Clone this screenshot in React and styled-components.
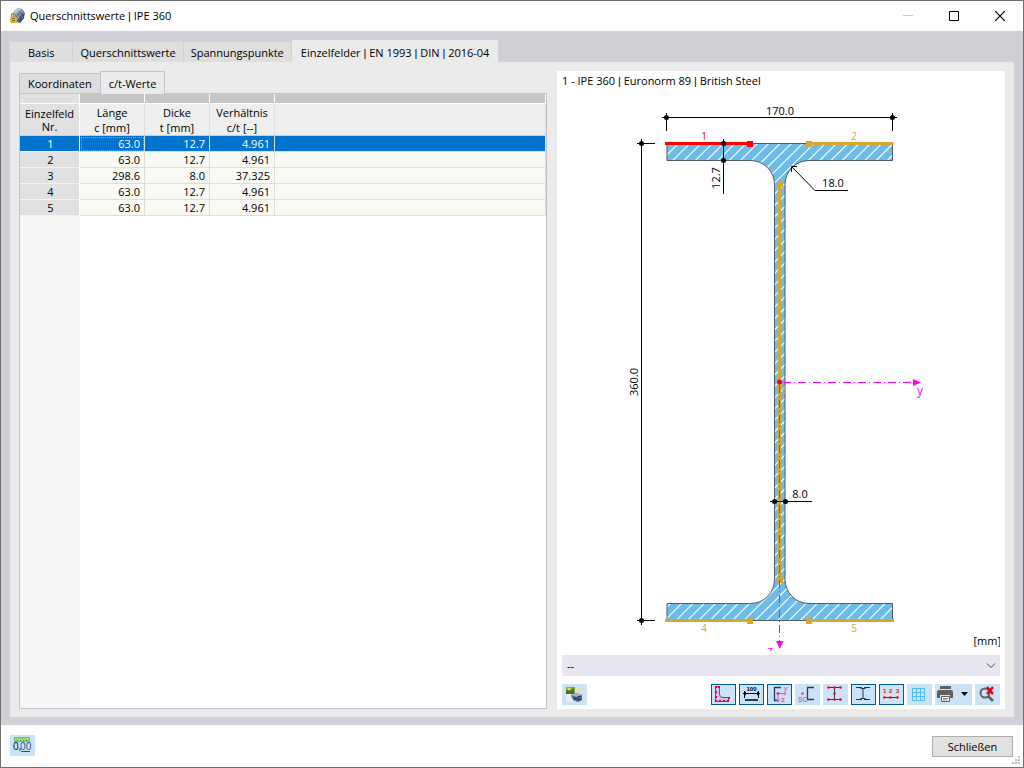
import React, { useState } from "react";
import styled, { createGlobalStyle, css } from "styled-components";

const GlobalStyle = createGlobalStyle`
  * {
    box-sizing: border-box;
  }
  body {
    margin: 0;
    background: #fff;
    color: #000;
    font-family: "Open Sans", "Noto Sans", sans-serif;
    font-size: 11px;
    line-height: 16px;
  }
  button,
  select {
    font: inherit;
    color: inherit;
  }
`;

const Window = styled.div`
  display: flex;
  flex-direction: column;
  min-height: 100vh;
  border: 1px solid #707070;
  background: #fff;
`;

const TitleBar = styled.header`
  display: flex;
  align-items: center;
  height: 30px;
  padding-left: 8px;
  h1 {
    flex: 1;
    margin: 0 0 0 5px;
    font-size: 11px;
    font-weight: 400;
  }
`;

const WindowButton = styled.button`
  display: grid;
  place-items: center;
  width: 46px;
  height: 28px;
  padding: 0;
  border: 0;
  background: none;
`;

const Body = styled.main`
  flex: 1;
  display: flex;
  flex-direction: column;
  padding: 9px 9px 8px;
  background: #d1d0d6;
`;

const MainTabs = styled.div`
  display: flex;
  align-items: flex-end;
`;

const MainTab = styled.button`
  height: 20px;
  margin: 0;
  padding: 2px 7px 0;
  border: 0;
  border-right: 1px solid #d1d0d6;
  background: #dedede;
  white-space: nowrap;
  &:first-child {
    padding: 2px 18px 0;
  }
  ${({ $active }) =>
    $active &&
    css`
      height: 22px;
      padding: 4px 9px 0;
      border: 0;
      background: #ebebeb;
      line-height: 14px;
    `}
`;

/* thin separator between the parts of a title */
const Bar = styled.span`
  font-family: "Liberation Sans", sans-serif;
`;

const Panel = styled.div`
  flex: 1;
  display: grid;
  grid-template-columns: 528fr 448fr;
  gap: 10px;
  padding: 9px 9px 8px;
  background: #ebebeb;
`;

const Left = styled.section`
  display: flex;
  flex-direction: column;
`;

const SubTabs = styled.div`
  display: flex;
  align-items: flex-end;
`;

const SubTab = styled.button`
  height: 20px;
  padding: 1px 8px 0;
  border: 1px solid #c3c3cf;
  border-width: 1px 0 0 1px;
  background: #dedede;
  white-space: nowrap;
  ${({ $active }) =>
    $active &&
    css`
      z-index: 1;
      height: 23px;
      margin-bottom: -1px;
      padding-top: 2px;
      border-right-width: 1px;
      background: #ebebeb;
    `}
`;

const TableFrame = styled.div`
  flex: 1;
  border: 1px solid #c3c3cf;
  background: linear-gradient(to right, #f7f7f7 60px, #fff 60px);
`;

const Table = styled.table`
  width: 100%;
  table-layout: fixed;
  border-collapse: separate;
  border-spacing: 0;
  th,
  td {
    height: 16px;
    padding: 0 4px 0 3px;
    border: 0 solid #ddd;
    border-width: 0 1px 1px 0;
    line-height: 15px;
    font-weight: 400;
  }
  td {
    background: #f9faf4;
    text-align: right;
  }
`;

const BarCell = styled.td`
  && {
    height: 10px;
    padding: 0;
    border-color: #fff;
    line-height: 9px;
    background: ${({ $first }) => ($first ? "#e1e1e1" : "#c6c6c6")};
  }
`;

const HeadCell = styled.th`
  && {
    height: 32px;
    padding: 0;
    border-color: #ccc;
    border-right-color: #ddd;
    line-height: 15px;
    background: #efefef;
    text-align: center;
  }
  &&:first-child {
    border-right-color: #fff;
    line-height: 13px;
    background: #e1e1e1;
  }
`;

const RowHead = styled.th`
  && {
    padding: 0 0 0 2px;
    border-color: #fff;
    border-bottom-color: #f4f4f4;
    background: #e1e1e1;
  }
`;

const Row = styled.tr`
  ${({ $selected }) =>
    $selected &&
    css`
      && > td,
      && > th {
        background: #0073cf;
        color: #fff;
      }
      && > td:nth-child(2) {
        outline: 1px dotted #ff8427;
        outline-offset: -2px;
      }
    `}
`;

const Preview = styled.section`
  display: flex;
  flex-direction: column;
  padding: 2px 5px 4px;
  background: #fff;
  h2 {
    margin: 0 0 1px;
    font-size: 11px;
    font-weight: 400;
  }
`;

const Drawing = styled.svg`
  display: block;
  width: 100%;
  font-family: "Open Sans", "Noto Sans", sans-serif;
  font-size: 11px;
`;

const SelectWrap = styled.div`
  display: grid;
  align-items: center;
  margin: 4px 0 8px;
  select,
  svg {
    grid-area: 1 / 1;
  }
  select {
    appearance: none;
    width: 100%;
    height: 21px;
    padding: 0 5px;
    border: 0;
    border-radius: 0;
    background: #e7e7f2;
  }
  svg {
    justify-self: end;
    margin-right: 4px;
    pointer-events: none;
  }
`;

const Toolbar = styled.div`
  display: flex;
  gap: 3px;
`;

const Spacer = styled.span`
  flex: 1;
`;

const ToolButton = styled.button`
  display: flex;
  align-items: center;
  justify-content: ${({ $wide }) => ($wide ? "flex-start" : "center")};
  width: ${({ $wide }) => ($wide ? "37px" : "25px")};
  height: 21px;
  padding: 0;
  border: ${({ $on }) => ($on ? "1px solid #00599f" : "0")};
  background: #cbe3f7;
  svg {
    flex: none;
    display: block;
  }
`;

const Footer = styled.footer`
  position: relative;
  display: flex;
  align-items: flex-start;
  justify-content: space-between;
  height: 42px;
  padding: 10px 10px 10px 9px;
  background: #fff;
`;

const CloseButton = styled.button`
  align-self: flex-end;
  width: 81px;
  height: 21px;
  padding: 1px 0 0;
  border: 1px solid #adadad;
  background: #e1e1e1;
`;

const Grip = styled.svg`
  position: absolute;
  right: 3px;
  bottom: 3px;
`;

const mainTabs = [
  ["Basis"],
  ["Querschnittswerte"],
  ["Spannungspunkte"],
  ["Einzelfelder", "EN 1993", "DIN", "2016-04"],
];

const rows = [
  { nr: 1, c: "63.0", t: "12.7", ratio: "4.961" },
  { nr: 2, c: "63.0", t: "12.7", ratio: "4.961" },
  { nr: 3, c: "298.6", t: "8.0", ratio: "37.325" },
  { nr: 4, c: "63.0", t: "12.7", ratio: "4.961" },
  { nr: 5, c: "63.0", t: "12.7", ratio: "4.961" },
];

const sectionPath =
  "M667 143.5H892.5V160.5H809A24 24 0 0 0 785 184.5V579.5A24 24 0 0 0 809 603.5H892.5V620.5H667V603.5H750.5A24 24 0 0 0 774.5 579.5V184.5A24 24 0 0 0 750.5 160.5H667Z";

// 45° lines x + y = const, clipped to the profile
const hatchStep = 11.3;
const hatchPath = Array.from({ length: 64 }, (_, i) => {
  const sum = 810.6 + i * hatchStep;
  return `M${sum - 630} 630 ${sum - 140} 140`;
}).join("");

function Joined({ parts }) {
  return parts.map((part, i) => (
    <React.Fragment key={part}>
      {i > 0 && (
        <>
          {" "}
          <Bar>|</Bar>{" "}
        </>
      )}
      {part}
    </React.Fragment>
  ));
}

function AppIcon() {
  return (
    <svg width="16" height="16" viewBox="0 0 16 16">
      <path d="M5 3 9 0l4 1 3 4-1 5-4 5-5-1-2-6Z" fill="#5f7396" />
      <path d="M5 3 9 0l4 1-4 2-4 5Z" fill="#b4c5da" />
      <path d="M11 5l4-1v6l-4 5-2-4Z" fill="#3e4f70" />
      <path
        d="M5 4l6 7M7 2l7 8M10 1l5 5M5 8l7-7M8 11l6-8"
        stroke="#c5d3e3"
        strokeWidth=".6"
      />
      <path
        d="M2.500 9V7.500a2 2 0 0 1 4 0V9"
        fill="none"
        stroke="#a88b32"
        strokeWidth="1.400"
      />
      <rect x="1" y="8.500" width="7" height="6.500" rx="2" fill="#d9b33a" />
      <path d="M3 10.500h3M3 12.500h3" stroke="#8d701c" />
    </svg>
  );
}

function Dot({ x, y }) {
  return <circle cx={x} cy={y} r="2.500" />;
}

function SectionDrawing() {
  return (
    <Drawing viewBox="562 90 438 561" role="img" aria-label="IPE 360">
      <defs>
        <clipPath id="profile">
          <path d={sectionPath} />
        </clipPath>
      </defs>
      <path d={sectionPath} fill="#6cbbe9" />
      <path
        d={hatchPath}
        clipPath="url(#profile)"
        stroke="#fff"
        strokeWidth="1.100"
      />
      <path d={sectionPath} fill="none" stroke="#4d5c66" />

      {/* plate elements */}
      <g stroke="#d6a632" strokeWidth="3" fill="#d6a632">
        <path d="M809 143.500H893.500M779.500 185V583M665 620.500H750M809 620.500H894" />
        <g stroke="none">
          <rect x="806" y="141" width="6" height="6" />
          <rect x="777" y="181" width="6" height="6" />
          <rect x="777" y="577" width="6" height="6" />
          <rect x="747" y="618" width="6" height="6" />
          <rect x="806" y="618" width="6" height="6" />
        </g>
      </g>
      <path d="M665 143.500H750" stroke="#f00" strokeWidth="3" />
      <rect x="747" y="141" width="6" height="6" fill="#f00" />
      <g fontSize="10" textAnchor="middle" fill="#d6a632">
        <text x="704" y="140" fill="#f00">
          1
        </text>
        <text x="854" y="140">2</text>
        <text x="783" y="394">3</text>
        <text x="704" y="632">4</text>
        <text x="854" y="632">5</text>
      </g>

      {/* principal axes */}
      <g stroke="#f0f" strokeDasharray="8 3 1 3" fill="none">
        <path d="M783 382.500H913" />
        <path d="M779.500 385V641" />
      </g>
      <g fill="#f0f">
        <path d="M913 379v7l8-3.500Z" />
        <path d="M776 641h7.500l-3.750 8Z" />
        <text x="917" y="395" fontSize="12">
          y
        </text>
        <text x="767" y="655" fontSize="12">
          z
        </text>
      </g>
      <circle cx="779.500" cy="382" r="2.500" fill="#f00" />

      {/* dimensions */}
      <g stroke="#000" fill="none" shapeRendering="crispEdges">
        <path d="M662 117.500H897M666.500 113V131M892.500 113V131" />
        <path d="M641.500 139V625M637 143.500H655M637 620.500H655" />
        <path d="M723.500 139V194" />
        <path d="M770 501.500H812" />
      </g>
      <path
        d="M791.500 166.500 815 190.500H848M791.500 172V166.500H797"
        stroke="#000"
        fill="none"
      />
      <Dot x={666.5} y={117.5} />
      <Dot x={892.5} y={117.5} />
      <Dot x={641.5} y={143.5} />
      <Dot x={641.5} y={620.5} />
      <Dot x={723.5} y={143.5} />
      <Dot x={723.5} y={160.5} />
      <Dot x={774.5} y={501.5} />
      <Dot x={785.5} y={501.5} />
      <g textAnchor="middle">
        <text x="780" y="115">
          170.0
        </text>
        <text x="833" y="187">
          18.0
        </text>
        <text x="800" y="498">
          8.0
        </text>
        <text transform="translate(720 178) rotate(-90)">12.7</text>
        <text transform="translate(638 382) rotate(-90)">360.0</text>
      </g>
      <text x="1001" y="645" textAnchor="end">
        [mm]
      </text>
    </Drawing>
  );
}

const icons = {
  view: (
    <>
      <rect x="1" y="2" width="9" height="7" fill="#7fa53c" />
      <path d="M1 6l3-2 2 2 3-3v6H1Z" fill="#3f6f3a" />
      <circle cx="4" cy="4" r="1.500" fill="#e8e23a" />
      <path d="M10 2h7v7h-7Z" fill="#e6dfc4" />
      <path d="M1 9h7v8H1Z" fill="#e8eef5" />
      <path d="M6 10l5-2 6 2v5l-4 2-5-2Z" fill="#4c6688" />
      <path d="M6 10l5-2 6 2-5 2Z" fill="#9db7d3" />
      <path d="M9 13l7 2M12 12l4-1" stroke="#26364f" />
    </>
  ),
  shape: (
    <>
      <path
        d="M1.500 1.500H5.500V9Q5.500 12.500 9 12.500H14.500V16.500H1.500Z"
        fill="#c9c3f7"
        stroke="#8d3f7a"
      />
      <path
        d="M1 1h2v2H1ZM4 1h2v2H4ZM1 6h2v2H1ZM1 11h2v2H1ZM1 15h2v2H1ZM5 15h2v2H5ZM9 15h2v2H9ZM14 12h2v2H14ZM13 15h2v2H13Z"
        fill="#f00018"
      />
    </>
  ),
  dimension: (
    <>
      <text
        x="9.500"
        y="5.500"
        fontSize="6"
        fontWeight="700"
        textAnchor="middle"
        fontFamily="Liberation Sans, sans-serif"
      >
        100
      </text>
      <path d="M1 8.500H18M2.500 6V13M16.500 6V13" stroke="#000" />
      <path d="M1 8.500l3-2v4ZM18 8.500l-3-2v4Z" />
      <path d="M3 15H16" stroke="#2b3563" strokeWidth="2" />
    </>
  ),
  axes: (
    <>
      <path
        d="M11 2.500H4.500V15.500H8"
        fill="none"
        stroke="#2b3563"
        strokeWidth="1.300"
      />
      <g stroke="#d4649b" fill="none">
        <path d="M7 8.500H16M8 8.500V17M14 6.500l2 2-2 2M6 14l2 3 2-3M11.500 13.500h3l-3 3h3" />
        <path d="M14 2l2 3.500M17.500 2 14.500 7" strokeWidth=".9" />
      </g>
      <circle cx="8" cy="8.500" r="1.500" fill="#c73f80" />
    </>
  ),
  shearCenter: (
    <>
      <path
        d="M16 2.500H9.500V14.500H16"
        fill="none"
        stroke="#2b3563"
        strokeWidth="1.300"
      />
      <circle cx="4.500" cy="8.500" r="1.500" fill="#d4649b" />
      <text
        x="0"
        y="17"
        fontSize="7"
        fill="#c73f80"
        fontFamily="Liberation Sans Narrow, Liberation Sans, sans-serif"
      >
        SC
      </text>
    </>
  ),
  points: (
    <>
      <path d="M2 2.500H15M2 14.500H15M8.500 2V15" stroke="#2b3563" />
      <g fill="#f00">
        <circle cx="2.500" cy="2.500" r="1.300" />
        <circle cx="8.500" cy="2.500" r="1.300" />
        <circle cx="14.500" cy="2.500" r="1.300" />
        <circle cx="8.500" cy="8.500" r="1.300" />
        <circle cx="2.500" cy="14.500" r="1.300" />
        <circle cx="8.500" cy="14.500" r="1.300" />
        <circle cx="14.500" cy="14.500" r="1.300" />
      </g>
    </>
  ),
  parts: (
    <path
      d="M2 2.500H8M10 2.500H16M2 14.500H8M10 14.500H16M9 4V13M6.500 3.500h5M6.500 13.500h5"
      stroke="#2b3563"
    />
  ),
  numbers: (
    <>
      <g
        fontSize="6"
        fontWeight="700"
        fill="#f00"
        fontFamily="Liberation Sans, sans-serif"
      >
        <text x="1" y="8">
          1
        </text>
        <text x="7" y="8">
          2
        </text>
        <text x="14" y="8">
          3
        </text>
      </g>
      <path d="M2 12.500H16" stroke="#2b3563" />
      <g fill="#f00">
        <circle cx="2.500" cy="12.500" r="1.300" />
        <circle cx="8.500" cy="12.500" r="1.300" />
        <circle cx="15.500" cy="12.500" r="1.300" />
      </g>
    </>
  ),
  grid: (
    <path
      d="M2.500 3.500H14.500V15.500H2.500ZM6.500 3V16M10.500 3V16M2 7.500H15M2 11.500H15"
      fill="none"
      stroke="#4dbcfb"
    />
  ),
  print: (
    <>
      <path
        d="M5 1H16V4H5ZM4 5H16Q18 5 18 7V13H15V10H5V13H2V7Q2 5 4 5Z"
        fill="#606060"
      />
      <path d="M6.500 11.500H14.500V16.500H6.500Z" fill="#fff" stroke="#606060" />
      <path d="M8 13.500H13M8 15H12" stroke="#606060" strokeWidth=".8" />
    </>
  ),
  zoomReset: (
    <>
      <circle
        cx="7"
        cy="8"
        r="4.500"
        fill="none"
        stroke="#606060"
        strokeWidth="2"
      />
      <path d="M10 11l5 5" stroke="#606060" strokeWidth="2.500" />
      <path d="M9 2l6 7M15 2 9 9" stroke="#e3001a" strokeWidth="2.500" />
    </>
  ),
  decimals: (
    <>
      <rect x="1.500" y="1.500" width="15" height="4" fill="#8edb74" stroke="#7cc069" />
      <path d="M4.500 4V5M7.500 4V5M10.500 4V5M13.500 4V5" stroke="#4f9146" />
      <text x="0" y="14" fontSize="10">
        0,
      </text>
      <text x="7" y="14" fontSize="10" fill="#2b4c8c">
        00
      </text>
      <path d="M8 15.500H17" stroke="#2b4c8c" />
    </>
  ),
};

const tools = [
  { icon: "shape", label: "Querschnitt", on: true },
  { icon: "dimension", label: "Bemaßung", on: true },
  { icon: "axes", label: "Achsen", on: true },
  { icon: "shearCenter", label: "Schubmittelpunkt" },
  { icon: "points", label: "Spannungspunkte" },
  { icon: "parts", label: "Einzelfelder", on: true },
  { icon: "numbers", label: "Nummerierung", on: true },
  { icon: "grid", label: "Raster" },
  { icon: "print", label: "Drucken", wide: true },
  { icon: "zoomReset", label: "Zoom zurücksetzen" },
];

function Tool({ icon, label, on, wide }) {
  return (
    <ToolButton type="button" aria-label={label} $on={on} $wide={wide}>
      <svg width="19" height="19" viewBox="0 0 19 19">
        {icons[icon]}
      </svg>
      {wide && (
        <svg width="15" height="7" viewBox="0 0 15 7">
          <path d="M7 1h7L10.500 5Z" />
        </svg>
      )}
    </ToolButton>
  );
}

function ValueTable() {
  const [selected, setSelected] = useState(1);
  return (
    <Table>
      <colgroup>
        <col style={{ width: 60 }} />
        <col style={{ width: 65 }} />
        <col style={{ width: 65 }} />
        <col style={{ width: 65 }} />
        <col />
      </colgroup>
      <thead>
        <tr>
          <BarCell $first />
          <BarCell />
          <BarCell />
          <BarCell />
          <BarCell />
        </tr>
        <tr>
          <HeadCell scope="col">
            Einzelfeld
            <br />
            Nr.
          </HeadCell>
          <HeadCell scope="col">
            Länge
            <br />c [mm]
          </HeadCell>
          <HeadCell scope="col">
            Dicke
            <br />t [mm]
          </HeadCell>
          <HeadCell scope="col">
            Verhältnis
            <br />
            c/t [--]
          </HeadCell>
          <HeadCell />
        </tr>
      </thead>
      <tbody>
        {rows.map((row) => (
          <Row
            key={row.nr}
            $selected={row.nr === selected}
            onClick={() => setSelected(row.nr)}
          >
            <RowHead scope="row">{row.nr}</RowHead>
            <td>{row.c}</td>
            <td>{row.t}</td>
            <td>{row.ratio}</td>
            <td />
          </Row>
        ))}
      </tbody>
    </Table>
  );
}

function App() {
  return (
    <Window>
      <GlobalStyle />
      <TitleBar>
        <AppIcon />
        <h1>
          <Joined parts={["Querschnittswerte", "IPE 360"]} />
        </h1>
        <WindowButton type="button" aria-label="Minimieren">
          <svg width="10" height="10" viewBox="0 0 10 10">
            <path d="M0 4.500H10" stroke="#ccc" />
          </svg>
        </WindowButton>
        <WindowButton type="button" aria-label="Maximieren">
          <svg width="10" height="10" viewBox="0 0 10 10">
            <path d="M.5.500H9.500V9.500H.5Z" fill="none" stroke="#000" />
          </svg>
        </WindowButton>
        <WindowButton type="button" aria-label="Fenster schließen">
          <svg width="10" height="10" viewBox="0 0 10 10">
            <path d="M0 0 10 10M10 0 0 10" stroke="#000" strokeWidth="1.200" />
          </svg>
        </WindowButton>
      </TitleBar>
      <Body>
        <MainTabs role="tablist">
          {mainTabs.map((parts, i) => (
            <MainTab
              key={parts[0]}
              type="button"
              role="tab"
              aria-selected={i === 3}
              $active={i === 3}
            >
              <Joined parts={parts} />
            </MainTab>
          ))}
        </MainTabs>
        <Panel>
          <Left>
            <SubTabs role="tablist">
              <SubTab type="button" role="tab" aria-selected={false}>
                Koordinaten
              </SubTab>
              <SubTab type="button" role="tab" aria-selected $active>
                c/t-Werte
              </SubTab>
            </SubTabs>
            <TableFrame>
              <ValueTable />
            </TableFrame>
          </Left>
          <Preview>
            <h2>
              <Joined parts={["1 - IPE 360", "Euronorm 89", "British Steel"]} />
            </h2>
            <SectionDrawing />
            <SelectWrap>
              <select aria-label="Ergebnis">
                <option>--</option>
              </select>
              <svg width="10" height="6" viewBox="0 0 10 6">
                <path d="M1 .5 5 4.500 9 .5" fill="none" stroke="#444" />
              </svg>
            </SelectWrap>
            <Toolbar>
              <Tool icon="view" label="Ansicht" />
              <Spacer />
              {tools.map((tool) => (
                <Tool key={tool.icon} {...tool} />
              ))}
            </Toolbar>
          </Preview>
        </Panel>
      </Body>
      <Footer>
        <Tool icon="decimals" label="Dezimalstellen" />
        <CloseButton type="button">Schließen</CloseButton>
        <Grip width="8" height="8" viewBox="0 0 8 8" fill="#bfbfbf">
          <path d="M6 0h2v2H6ZM3 3h2v2H3ZM6 3h2v2H6ZM0 6h2v2H0ZM3 6h2v2H3ZM6 6h2v2H6Z" />
        </Grip>
      </Footer>
    </Window>
  );
}

export default App;
